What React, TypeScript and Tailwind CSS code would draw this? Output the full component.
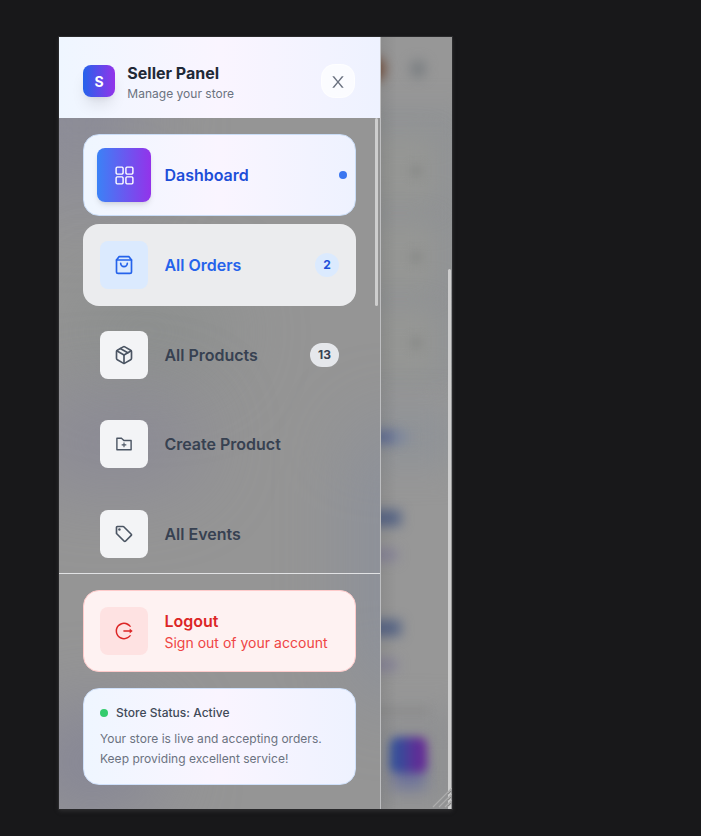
import type { ReactNode } from "react";
import { RxDashboard } from "react-icons/rx";
import { FiPackage, FiShoppingBag } from "react-icons/fi";
import { AiOutlineFolderAdd, AiOutlineLogout } from "react-icons/ai";
import { MdOutlineLocalOffer } from "react-icons/md";

const panelGradient = "bg-[linear-gradient(90deg,#eff6ff,#faf5ff_50%,#eef2ff)]";

function CloseIcon() {
  return (
    <svg width="18" height="18" viewBox="0 0 1024 1024" fill="currentColor">
      <path d="M563.8 512l262.5-312.9c4.4-5.2.7-13.1-6.1-13.1h-79.8c-4.7 0-9.2 2.1-12.3 5.7L511.6 449.8 295.1 191.7c-3-3.6-7.5-5.7-12.3-5.7H203c-6.8 0-10.5 7.9-6.1 13.1L459.4 512 196.9 824.9A7.95 7.95 0 0 0 203 838h79.8c4.7 0 9.2-2.1 12.3-5.7l216.5-258.1 216.5 258.1c3 3.6 7.5 5.7 12.3 5.7h79.8c6.8 0 10.5-7.9 6.1-13.1L563.8 512z" />
    </svg>
  );
}

function NavItem({ icon, label, badge }: { icon: ReactNode; label: string; badge?: string }) {
  return (
    <div className="flex h-[81.83px] shrink-0 items-center rounded-2xl px-[17px]">
      <div className="flex size-12 items-center justify-center rounded-lg bg-[#f3f4f6] text-[#4b5563]">{icon}</div>
      <span className="ml-[16.4px] flex-1 text-base font-semibold text-[#374151]">{label}</span>
      {badge && (
        <span className="flex h-6 items-center rounded-full bg-[#e5e7eb] px-2 text-xs font-bold text-[#374151]">{badge}</span>
      )}
    </div>
  );
}

function Backdrop() {
  return (
    <div className="absolute inset-0 overflow-hidden bg-[#959595]">
      <div className="absolute -left-10 -top-10 h-[210px] w-[120px] rounded-full bg-[#86869a]/60 blur-2xl" />
      <div className="absolute left-2 top-[250px] h-[90px] w-[160px] rounded-full bg-[#858b88]/60 blur-2xl" />
      <div className="absolute -left-8 top-[365px] h-[80px] w-[170px] rounded-full bg-[#828096]/60 blur-2xl" />
      <div className="absolute left-[305px] top-[390px] h-[270px] w-[60px] rounded-full bg-[#838ba0]/70 blur-2xl" />
      <div className="absolute -left-8 top-[675px] h-[100px] w-[130px] rounded-full bg-[#808096]/80 blur-2xl" />
      <div className="absolute left-[322px] top-0 h-full w-[71px] overflow-hidden bg-[#979797]">
        <div className="absolute -left-5 top-[70px] h-[280px] w-[110px] bg-[#919395] blur-md" />
        <div className="absolute -left-5 top-[98px] h-[70px] w-[76px] rounded-xl bg-[#959694] blur-md" />
        <div className="absolute -left-5 top-[184px] h-[70px] w-[76px] rounded-xl bg-[#959694] blur-md" />
        <div className="absolute -left-5 top-[270px] h-[70px] w-[76px] rounded-xl bg-[#959694] blur-md" />
        <div className="absolute -left-5 top-[370px] h-[60px] w-24 bg-[#909397] blur-lg" />
        <div className="absolute -left-4 top-[20px] h-6 w-5 rounded-full bg-[#76503d] blur-[6px]" />
        <div className="absolute left-[29px] top-[23px] h-[18px] w-4 rounded-full bg-[#7b7f82] blur-[6px]" />
        <div className="absolute left-[29px] top-[128px] size-3 rounded-full bg-[#848684]/80 blur-[5px]" />
        <div className="absolute left-[29px] top-[214px] size-3 rounded-full bg-[#848684]/80 blur-[5px]" />
        <div className="absolute left-[29px] top-[300px] size-3 rounded-full bg-[#848684]/80 blur-[5px]" />
        <div className="absolute -left-3 top-[394px] h-3 w-7 bg-[#5c6a94] blur-[6px]" />
        <div className="absolute left-3 top-[395px] h-2.5 w-4 bg-[#7a87a0]/80 blur-[6px]" />
        <div className="absolute -left-3 top-[473px] h-4 w-8 bg-[#566485] blur-[6px]" />
        <div className="absolute -left-3 top-[512px] h-3 w-7 bg-[#858297] blur-[6px]" />
        <div className="absolute -left-3 top-[583px] h-4 w-8 bg-[#566485] blur-[6px]" />
        <div className="absolute -left-3 top-[622px] h-3 w-7 bg-[#858297] blur-[6px]" />
        <div className="absolute -left-4 top-[675px] h-24 w-24 bg-[#8f9092] blur-lg" />
        <div className="absolute -left-4 top-[671px] h-1.5 w-[64px] bg-[#8b8b8b] blur-[5px]" />
        <div className="absolute left-3 top-[724px] h-7 w-8 bg-[#70759a] blur-[7px]" />
        <div className="absolute left-[9px] top-[700px] h-[36px] w-[37px] rounded-lg bg-[linear-gradient(90deg,#344f9a_20%,#632a96_80%)] blur-[5px]" />
        <div className="absolute left-0 top-0 h-full w-4 bg-linear-to-r from-black/7 to-transparent" />
      </div>
    </div>
  );
}

export default function App() {
  return (
    <div className="h-[836px] w-[701px] overflow-hidden bg-[#18181a] pl-[59px] pt-[37px] font-['Inter',sans-serif]">
      <div className="relative h-[772px] w-[393px] shadow-[0_0_0_1px_#29292b,0_2px_4px_#303032]">
        <Backdrop />
        <aside className="relative flex h-full w-[322px] flex-col border-r border-[#bebfc1]">
          <header className={`flex h-[81px] shrink-0 items-center justify-between px-6 pt-[7px] ${panelGradient}`}>
            <div className="flex items-center">
              <div className="flex size-8 items-center justify-center rounded-lg bg-[linear-gradient(90deg,#2563eb,#9333ea)] pt-px text-sm font-bold text-white shadow-lg">S</div>
              <div className="ml-[12.3px] pt-[5px]">
                <h1 className="text-base leading-5 font-bold text-[#1f2937]">Seller Panel</h1>
                <p className="text-xs leading-[21px] tracking-[0.02px] text-[#6b7280]">Manage your store</p>
              </div>
            </div>
            <button aria-label="Close" className="mr-px flex size-[34px] items-center justify-center rounded-[14px] border border-white/60 bg-white/70 pt-px text-[#6b7280]">
              <CloseIcon />
            </button>
          </header>

          <div className="relative h-[455px] shrink-0 overflow-hidden">
            <nav className="flex flex-col gap-2 px-6 pt-4">
              <div className={`flex h-[81.83px] shrink-0 items-center rounded-2xl border border-[#c9dcf6] pl-[13px] pr-2 ${panelGradient}`}>
                <div className="flex size-[54px] items-center justify-center rounded-lg bg-[linear-gradient(90deg,#3b82f6,#9333ea)] pl-px pt-px text-white shadow-md">
                  <RxDashboard size={21} />
                </div>
                <span className="ml-[13.4px] flex-1 text-base font-semibold text-[#1d4ed8]">Dashboard</span>
                <span className="size-2 rounded-full bg-[#3b76f0]" />
              </div>
              <div className="flex h-[81.83px] shrink-0 items-center rounded-2xl bg-[#ebecee] px-[17px]">
                <div className="flex size-12 items-center justify-center rounded-lg bg-[#dbeafe] text-[#2563eb]">
                  <FiShoppingBag size={20} />
                </div>
                <span className="ml-[16.4px] flex-1 text-base font-semibold text-[#2563eb]">All Orders</span>
                <span className="flex size-6 items-center justify-center rounded-full bg-[#dbeafe] text-xs font-bold text-[#1d4ed8]">2</span>
              </div>
              <NavItem icon={<FiPackage size={20} />} label="All Products" badge="13" />
              <NavItem icon={<AiOutlineFolderAdd size={20} />} label="Create Product" />
              <NavItem icon={<MdOutlineLocalOffer size={20} />} label="All Events" />
            </nav>
            <div className="absolute right-[2px] top-0 h-[188px] w-[3px] rounded-full bg-[#cecece]" />
          </div>

          <footer className="flex flex-1 flex-col border-t border-[#e1e2e4] px-6 pt-4">
            <div className="flex h-[82px] shrink-0 items-center rounded-2xl border border-[#fecaca] bg-[#fef2f2] px-4">
              <div className="flex size-12 items-center justify-center rounded-lg bg-[#fee2e2] text-[#dc2626]">
                <AiOutlineLogout size={20} />
              </div>
              <div className="ml-[16.4px]">
                <p className="text-base leading-6 font-semibold text-[#dc2626]">Logout</p>
                <p className="text-sm leading-5 tracking-[0.02px] text-[#ef4444]">Sign out of your account</p>
              </div>
            </div>
            <div className={`mt-4 h-[97px] shrink-0 rounded-2xl border border-[#cfe0fa] px-4 pt-4 ${panelGradient}`}>
              <div className="flex h-4 items-center gap-2">
                <span className="size-2 rounded-full bg-[#34cc6e]" />
                <span className="text-xs font-medium tracking-[0.02px] text-[#414a59]">Store Status: Active</span>
              </div>
              <p className="mt-2 text-xs leading-5 tracking-[0.02px] text-[#6b7280]">
                Your store is live and accepting orders.
                <br />
                Keep providing excellent service!
              </p>
            </div>
          </footer>
        </aside>
        <div className="absolute right-[1px] top-[232px] h-[540px] w-[3px] rounded-t-full bg-[#cecece]" />
        <svg className="absolute bottom-[1px] right-0 h-5 w-5" viewBox="0 0 20 20" fill="none" stroke="#adadad" strokeWidth="1.2">
          <path d="M1 19 20 0M7 19 20 6M13 19l7-7" />
          <path d="m16 6 3-3m-3 9 3-3m-3 9 3-3" stroke="#888" />
        </svg>
      </div>
    </div>
  );
}
